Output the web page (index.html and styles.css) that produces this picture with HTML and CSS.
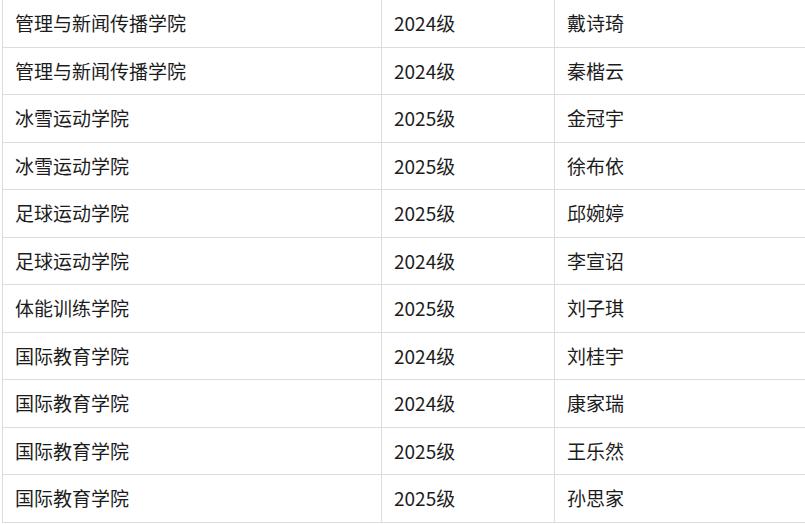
FILE: index.html
```html
<!DOCTYPE html>
<html lang="zh">
<head>
<meta charset="utf-8">
<link rel="stylesheet" href="styles.css">
</head>
<body>
<table class="list">
<colgroup><col class="c1"><col class="c2"><col class="c3"></colgroup>
<tbody>
<tr><td>管理与新闻传播学院</td><td>2024级</td><td>戴诗琦</td></tr>
<tr><td>管理与新闻传播学院</td><td>2024级</td><td>秦楷云</td></tr>
<tr><td>冰雪运动学院</td><td>2025级</td><td>金冠宇</td></tr>
<tr><td>冰雪运动学院</td><td>2025级</td><td>徐布依</td></tr>
<tr><td>足球运动学院</td><td>2025级</td><td>邱婉婷</td></tr>
<tr><td>足球运动学院</td><td>2024级</td><td>李宣诏</td></tr>
<tr><td>体能训练学院</td><td>2025级</td><td>刘子琪</td></tr>
<tr><td>国际教育学院</td><td>2024级</td><td>刘桂宇</td></tr>
<tr><td>国际教育学院</td><td>2024级</td><td>康家瑞</td></tr>
<tr><td>国际教育学院</td><td>2025级</td><td>王乐然</td></tr>
<tr><td>国际教育学院</td><td>2025级</td><td>孙思家</td></tr>
</tbody>
</table>
</body>
</html>
```
FILE: styles.css
```css
html, body {
  margin: 0;
  padding: 0;
  background: #fff;
  overflow: hidden;
}
.list {
  border-collapse: collapse;
  table-layout: fixed;
  width: 803px;
  margin: -1px 0 0 2px;
  font-family: "Noto Sans CJK SC", "Noto Sans", sans-serif;
  font-size: 19px;
  color: #1c1c1c;
}
.c1 { width: 379px; }
.c2 { width: 173px; }
.c3 { width: 251px; }
.list td {
  border: 1px solid #dcdcdc;
  padding: 0 12px;
  height: 46.5px;
  line-height: 24px;
  vertical-align: middle;
  white-space: nowrap;
}
```
